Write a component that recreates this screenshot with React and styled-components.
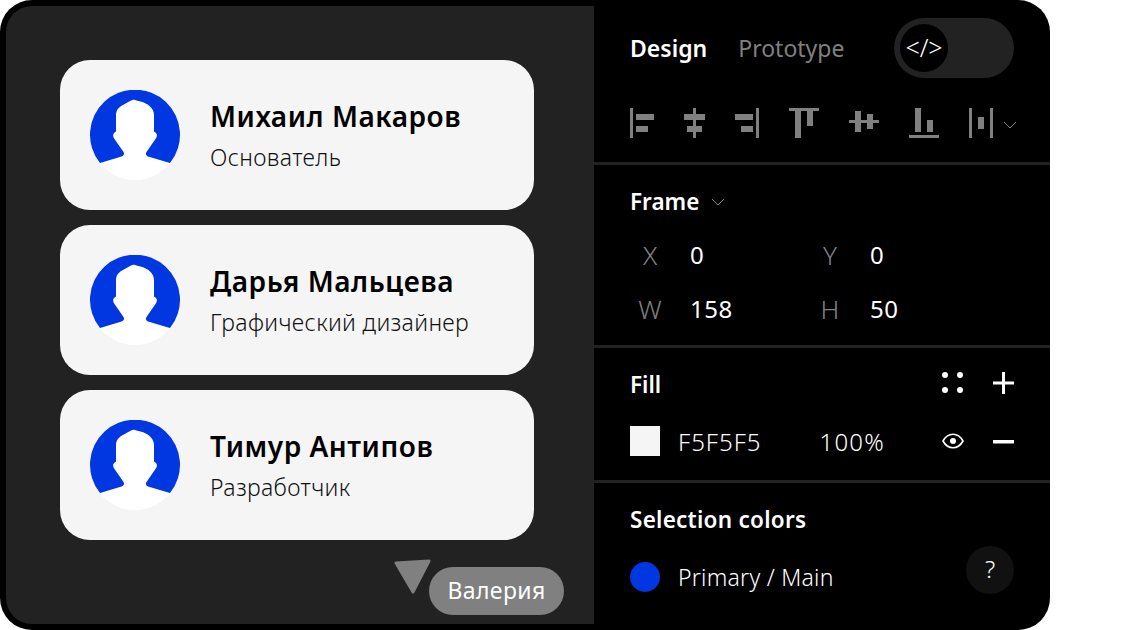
import React from "react";
import styled, { createGlobalStyle } from "styled-components";

const GlobalStyle = createGlobalStyle`
  html, body {
    margin: 0;
    padding: 0;
    background: #fff;
  }
  body {
    font-family: "Noto Sans", "Open Sans", sans-serif;
  }
`;

const people = [
  { name: "Михаил Макаров", role: "Основатель" },
  { name: "Дарья Мальцева", role: "Графический дизайнер" },
  { name: "Тимур Антипов", role: "Разработчик" },
];

const alignIcons = [
  { width: 24, d: "M0 0h3v30H0zM6 6h18v6H6zM6 18h12v6H6z" },
  { width: 21, d: "M9 0h3v30H9zM0 6h21v6H0zM3 18h15v6H3z" },
  { width: 24, d: "M21 0h3v30h-3zM0 6h18v6H0zM6 18h12v6H6z" },
  { width: 30, d: "M0 0h30v3H0zM6 3h6v27H6zM18 3h6v15h-6z" },
  { width: 30, d: "M0 12h30v3H0zM6 3h6v21H6zM18 6h6v15h-6z" },
  { width: 30, d: "M0 27h30v3H0zM6 0h6v24H6zM18 12h6v12h-6z" },
  { width: 24, d: "M0 0h3v30H0zM21 0h3v30h-3zM9 9h6v12H9z" },
];

const Avatar = () => (
  <AvatarSvg viewBox="0 0 90 90">
    <circle cx="45" cy="45" r="45" fill="#fff" />
    <path fill="#0037e0" d="M10 73A45 45 0 1 1 80 73Z" />
    <path
      fill="#fff"
      d="M10 73 31.500 66.500c2.500-.8 3.200-2.800 2-4.500L24.500 49c-1.800-2.500-1.800-4.700-.2-6.200L26 41.500V25c0-4.500 2.500-7.500 6-9.500L41 10.500c1.600-.8 3-.8 4.500-.3l5 1.300C58 13.500 64 18 64 25V41.500l1.800 1.300c1.500 1.400 1.500 3.600 0 5.800L56.500 62c-1.200 1.800-.5 3.700 1.500 4.500L80 73C72 82.500 59 90 45 90S18 82.500 10 73Z"
    />
  </AvatarSvg>
);

export default function App() {
  return (
    <>
      <GlobalStyle />
      <Frame>
        <Canvas>
          <CardList>
            {people.map((person) => (
              <Card key={person.name}>
                <Avatar />
                <CardText>
                  <PersonName>{person.name}</PersonName>
                  <PersonRole>{person.role}</PersonRole>
                </CardText>
              </Card>
            ))}
          </CardList>
          <Cursor>
            <svg width="38" height="36" viewBox="0 0 38 36">
              <path
                fill="#808080"
                stroke="#808080"
                strokeWidth="3"
                strokeLinejoin="round"
                d="M2 4 35 2 19 33Z"
              />
            </svg>
            <CursorLabel>Валерия</CursorLabel>
          </Cursor>
        </Canvas>
        <Sidebar>
          <TopSection>
            <TabRow>
              <Tab $active>Design</Tab>
              <Tab>Prototype</Tab>
              <Toggle>
                <ToggleKnob>&lt;/&gt;</ToggleKnob>
              </Toggle>
            </TabRow>
            <AlignRow>
              {alignIcons.map((icon) => (
                <svg
                  key={icon.d}
                  width={icon.width}
                  height="30"
                  viewBox={`0 0 ${icon.width} 30`}
                >
                  <path fill="#808080" d={icon.d} />
                </svg>
              ))}
              <AlignChevron width="14" height="8" viewBox="0 0 14 8">
                <path d="M1 1l6 6 6-6" fill="none" stroke="#808080" />
              </AlignChevron>
            </AlignRow>
          </TopSection>
          <FrameSection>
            <SectionTitle>
              Frame
              <svg width="14" height="8" viewBox="0 0 14 8">
                <path d="M1 1l6 6 6-6" fill="none" stroke="#808080" />
              </svg>
            </SectionTitle>
            <FieldGrid>
              <Field><FieldLabel>X</FieldLabel><FieldValue>0</FieldValue></Field>
              <Field><FieldLabel>Y</FieldLabel><FieldValue>0</FieldValue></Field>
              <Field><FieldLabel>W</FieldLabel><FieldValue>158</FieldValue></Field>
              <Field><FieldLabel>H</FieldLabel><FieldValue>50</FieldValue></Field>
            </FieldGrid>
          </FrameSection>
          <FillSection>
            <RowBetween>
              <SectionTitle>Fill</SectionTitle>
              <IconPair $raised>
                <svg width="22" height="22" viewBox="0 0 22 22" fill="#fff">
                  <circle cx="3" cy="3" r="3" />
                  <circle cx="18" cy="3" r="3" />
                  <circle cx="3" cy="18" r="3" />
                  <circle cx="18" cy="18" r="3" />
                </svg>
                <svg width="22" height="22" viewBox="0 0 22 22" fill="#fff">
                  <path d="M1 9.500h21v3H1zM10 0h3v22h-3z" />
                </svg>
              </IconPair>
            </RowBetween>
            <RowBetween>
              <FillValues>
                <Swatch />
                <FillHex>F5F5F5</FillHex>
                <FillPercent>100%</FillPercent>
              </FillValues>
              <IconPair>
                <svg width="22" height="16" viewBox="0 0 22 16" fill="none">
                  <path
                    d="M1 8c2.500-4.500 6-6.800 10-6.800S18.500 3.500 21 8c-2.500 4.500-6 6.800-10 6.800S3.500 12.500 1 8Z"
                    stroke="#fff"
                    strokeWidth="1.600"
                  />
                  <circle cx="11" cy="8" r="3" fill="#fff" />
                </svg>
                <svg width="22" height="22" viewBox="0 0 22 22" fill="#fff">
                  <path d="M1 10h21v3.500H1z" />
                </svg>
              </IconPair>
            </RowBetween>
          </FillSection>
          <ColorsSection>
            <SelectionTitle>Selection colors</SelectionTitle>
            <ColorRow>
              <ColorDot />
              <ColorName>Primary / Main</ColorName>
            </ColorRow>
            <HelpButton>?</HelpButton>
          </ColorsSection>
        </Sidebar>
      </Frame>
    </>
  );
}

const Frame = styled.div`
  width: 1050px;
  height: 630px;
  box-sizing: border-box;
  padding: 6px 0 6px 6px;
  background: #000;
  border-radius: 32px;
  display: flex;
  overflow: hidden;
`;

const Canvas = styled.div`
  position: relative;
  width: 588px;
  height: 618px;
  flex-shrink: 0;
  box-sizing: border-box;
  padding: 54px 60px 0 54px;
  background: #222;
  border-radius: 26px 0 0 26px;
`;

const CardList = styled.div`
  display: flex;
  flex-direction: column;
  gap: 15px;
`;

const Card = styled.div`
  height: 150px;
  box-sizing: border-box;
  padding: 0 30px;
  background: #f5f5f5;
  border-radius: 30px;
  display: flex;
  align-items: center;
  gap: 30px;
`;

const AvatarSvg = styled.svg`
  width: 90px;
  height: 90px;
  flex-shrink: 0;
`;

const CardText = styled.div`
  display: flex;
  flex-direction: column;
  gap: 9px;
  padding-bottom: 2px;
`;

const PersonName = styled.div`
  font-size: 28px;
  line-height: 36px;
  letter-spacing: 0.55px;
  font-weight: 600;
  color: #000;
`;

const PersonRole = styled.div`
  font-size: 23px;
  line-height: 28px;
  letter-spacing: 0.35px;
  font-weight: 300;
  color: #111;
`;

const Cursor = styled.div`
  position: absolute;
  left: 388px;
  top: 553px;
  display: flex;
`;

const CursorLabel = styled.div`
  margin: 8px 0 0 -3px;
  width: 135px;
  height: 48px;
  border-radius: 24px;
  background: #808080;
  color: #fff;
  font-size: 23px;
  line-height: 46px;
  letter-spacing: 0.4px;
  text-align: center;
`;

const Sidebar = styled.div`
  flex: 1;
  min-width: 0;
  color: #fff;
  display: flex;
  flex-direction: column;
`;

const Section = styled.div`
  box-sizing: border-box;
  padding: 0 36px;
  border-bottom: 3px solid #222;
`;

const TopSection = styled(Section)`
  height: 159px;
  padding-top: 12px;
`;

const TabRow = styled.div`
  display: flex;
  align-items: center;
  height: 60px;
`;

const Tab = styled.div`
  font-size: 23px;
  font-weight: ${(p) => (p.$active ? 600 : 400)};
  color: ${(p) => (p.$active ? "#fff" : "#808080")};
  margin-right: 31px;
`;

const Toggle = styled.div`
  width: 120px;
  height: 60px;
  margin-left: auto;
  box-sizing: border-box;
  padding: 6px;
  border-radius: 30px;
  background: #222;
`;

const ToggleKnob = styled.div`
  width: 48px;
  height: 48px;
  border-radius: 50%;
  background: #000;
  color: #fff;
  font-size: 25px;
  font-weight: 300;
  line-height: 46px;
  text-align: center;
`;

const AlignRow = styled.div`
  display: flex;
  align-items: center;
  gap: 30px;
  margin-top: 30px;

  svg {
    flex-shrink: 0;
  }
`;

const AlignChevron = styled.svg`
  margin: 3px 0 0 -20px;
`;

const FrameSection = styled(Section)`
  height: 183px;
  padding-top: 22px;
`;

const SectionTitle = styled.div`
  font-size: 22.5px;
  line-height: 30px;
  font-weight: 600;
  display: flex;
  align-items: center;
  gap: 12px;
`;

const SelectionTitle = styled(SectionTitle)`
  letter-spacing: 0.25px;
`;

const FieldGrid = styled.div`
  display: grid;
  grid-template-columns: 180px 180px;
  row-gap: 24px;
  margin-top: 23px;
  padding-left: 6px;
`;

const Field = styled.div`
  display: flex;
  align-items: center;
  font-size: 24px;
  line-height: 30px;
`;

const FieldLabel = styled.span`
  width: 28px;
  margin-right: 26px;
  color: #808080;
  font-size: 26px;
  font-weight: 300;
  text-align: center;
`;

const FieldValue = styled.span`
  color: #fff;
  letter-spacing: 0.5px;
`;

const FillSection = styled(Section)`
  height: 135px;
  padding-top: 22px;
  display: flex;
  flex-direction: column;
  gap: 26px;
`;

const RowBetween = styled.div`
  display: flex;
  align-items: center;
  justify-content: space-between;
  height: 30px;
`;

const IconPair = styled.div`
  display: flex;
  align-items: center;
  gap: 28px;
  padding-bottom: ${(p) => (p.$raised ? "5px" : "0")};
`;

const FillValues = styled.div`
  display: flex;
  align-items: center;
`;

const Swatch = styled.div`
  width: 30px;
  height: 30px;
  background: #f5f5f5;
`;

const FillHex = styled.span`
  margin-left: 18px;
  font-size: 24px;
  letter-spacing: 1px;
  font-weight: 300;
`;

const FillPercent = styled.span`
  margin-left: 58px;
  font-size: 24px;
  letter-spacing: 1.2px;
  font-weight: 300;
`;

const ColorsSection = styled(Section)`
  position: relative;
  flex: 1;
  padding-top: 22px;
  border-bottom: none;
`;

const ColorRow = styled.div`
  display: flex;
  align-items: center;
  margin-top: 26px;
`;

const ColorDot = styled.div`
  width: 30px;
  height: 30px;
  border-radius: 50%;
  background: #0037e0;
`;

const ColorName = styled.span`
  margin-left: 18px;
  font-size: 23px;
  letter-spacing: 0.25px;
  font-weight: 300;
`;

const HelpButton = styled.div`
  position: absolute;
  right: 36px;
  top: 63px;
  width: 48px;
  height: 48px;
  border-radius: 50%;
  background: #111;
  font-size: 24px;
  font-weight: 300;
  line-height: 46px;
  text-align: center;
`;
